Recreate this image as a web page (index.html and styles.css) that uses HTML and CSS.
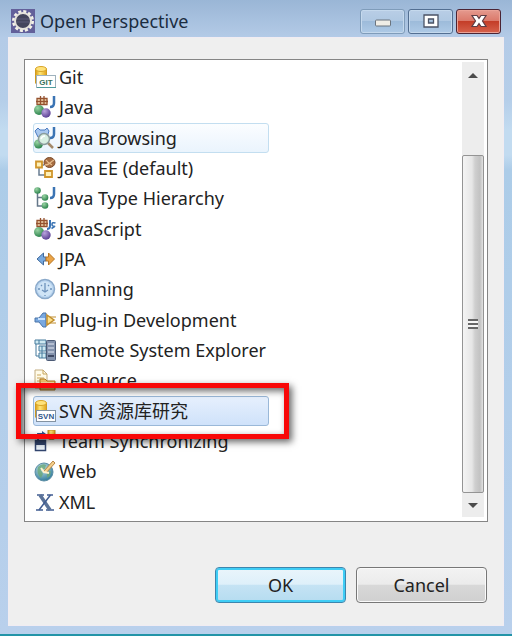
FILE: index.html
```html
<!DOCTYPE html>
<html lang="en">
<head>
    <meta charset="UTF-8">
    <meta name="viewport" content="width=device-width, initial-scale=1.0">
    <title>Open Perspective</title>
    <link rel="stylesheet" href="styles.css">
</head>
<body>
    <!-- Shared icon parts -->
    <svg class="defs" width="0" height="0" aria-hidden="true">
        <defs>
            <linearGradient id="gold">
                <stop offset="0" stop-color="#d99a10"/>
                <stop offset="0.4" stop-color="#ffe676"/>
                <stop offset="1" stop-color="#e0a21a"/>
            </linearGradient>
            <radialGradient id="green" cx="0.35" cy="0.3" r="0.8">
                <stop offset="0" stop-color="#9bd4a4"/>
                <stop offset="1" stop-color="#1f7a43"/>
            </radialGradient>
            <radialGradient id="purple" cx="0.35" cy="0.3" r="0.8">
                <stop offset="0" stop-color="#b9a3dc"/>
                <stop offset="1" stop-color="#50358c"/>
            </radialGradient>
            <radialGradient id="globe" cx="0.4" cy="0.3" r="0.8">
                <stop offset="0" stop-color="#c9e6ea"/>
                <stop offset="1" stop-color="#1f6f93"/>
            </radialGradient>
            <g id="cylinder">
                <path d="M1.5 3v14c0 2 11 2 11 0V3z" fill="url(#gold)" stroke="#d09a20"/>
                <ellipse cx="7" cy="3" rx="5.5" ry="2.5" fill="#ffe27a" stroke="#d8a528"/>
            </g>
            <g id="packages">
                <path d="M3 2.5h10v6H3z" fill="#f6dcb4" stroke="#95522f" stroke-width="1.3"/>
                <path d="M6.5 0v9M10 0v9M2 5.5h12" stroke="#95522f" stroke-width="1.3"/>
                <circle cx="5" cy="14" r="5" fill="url(#green)"/>
                <circle cx="12" cy="17" r="4.7" fill="url(#purple)"/>
            </g>
            <path id="jay" d="M20 0v7q0 4-4 4" fill="none" stroke="#3b74b4" stroke-width="2.5"/>
        </defs>
    </svg>

    <div class="window">
        <div class="titlebar">
            <svg class="app-icon" viewBox="0 0 24 24" aria-hidden="true">
                <rect width="24" height="24" fill="#63609a"/>
                <circle cx="12" cy="12" r="9.5" fill="none" stroke="#f3f1e8" stroke-width="3" stroke-dasharray="3 1.97"/>
                <circle cx="12" cy="12" r="8" fill="#44455c" stroke="#e4e1da" stroke-width="2"/>
                <path d="M6 10h12M5.5 13h13" stroke="#5c5d78"/>
            </svg>
            <h1>Open Perspective</h1>
            <div class="window-buttons">
                <button class="window-button" aria-label="Minimize">
                    <svg viewBox="0 0 18 16"><rect x="1.5" y="7" width="15" height="6" rx="1" fill="#efede6" stroke="#6b747e"/></svg>
                </button>
                <button class="window-button maximize" aria-label="Maximize">
                    <svg viewBox="0 0 18 16"><path d="M2 2h14v12H2zM6.500 6v4h5V6z" fill="#fff" fill-rule="evenodd" stroke="#4b5365" stroke-width="1.3"/></svg>
                </button>
                <button class="window-button close" aria-label="Close">
                    <svg viewBox="0 0 18 16"><path d="M2 2.500h5l2 3 2-3h5L12.500 8l3.500 5.500h-5l-2-3-2 3H2L5.500 8z" fill="#fff" stroke="#5e3d45" stroke-width="1.2"/></svg>
                </button>
            </div>
        </div>

        <div class="content">
            <div class="list-box">
                <ul class="perspectives" role="listbox" aria-label="Perspectives">
                    <li role="option">
                        <svg viewBox="0 0 22 22"><use href="#cylinder"/><rect x="2.5" y="9.5" width="19" height="12" fill="#fff" stroke="#9fb2bd"/><path d="M3 21.5h19" stroke="#4d9a9c"/><text class="tag git" x="12" y="19">GIT</text></svg>
                        Git
                    </li>
                    <li role="option">
                        <svg viewBox="0 0 22 22"><use href="#packages"/><use href="#jay"/></svg>
                        Java
                    </li>
                    <li role="option" class="hot">
                        <svg viewBox="0 0 22 22"><path d="M1 4l3-3 2 2h5l2-2 2 3-2 6H4z" fill="#a9c8ee" stroke="#4b7ac0"/><circle cx="4.5" cy="17" r="4.5" fill="url(#green)"/><path d="M13 15l6 6" stroke="#a3896a" stroke-width="2.5"/><circle cx="10" cy="12" r="5.5" fill="#d8efe2" stroke="#8b9c9c" stroke-width="1.5"/><path d="M7 12q1-3 4-3" fill="none" stroke="#fff" stroke-width="1.5"/><use href="#jay"/></svg>
                        Java Browsing
                    </li>
                    <li role="option">
                        <svg viewBox="0 0 22 22"><path d="M5 9v9h7M5 8h5" fill="none" stroke="#687c91" stroke-width="1.5"/><path d="M2 4.500h6v6H2zM11 14h7v6h-7z" fill="#fff1b8" stroke="#d0962c" stroke-width="1.8"/><ellipse cx="15.500" cy="5.500" rx="5.500" ry="5" fill="#a66c41" stroke="#7a4b2b"/><path d="M11 8q3 0 5-2t4-3M12 3q2 3 6 5" fill="none" stroke="#e8bd8c" stroke-width="1.3"/></svg>
                        Java EE (default)
                    </li>
                    <li role="option">
                        <svg viewBox="0 0 22 22"><path d="M3.500 4v15H10M3.500 10.500H10" fill="none" stroke="#65788a" stroke-width="1.5"/><circle cx="3.500" cy="3.500" r="3.300" fill="url(#green)"/><circle cx="11" cy="10.500" r="3.300" fill="url(#green)"/><circle cx="11" cy="18.500" r="3.300" fill="url(#green)"/><use href="#jay"/></svg>
                        Java Type Hierarchy
                    </li>
                    <li role="option">
                        <svg viewBox="0 0 22 22"><use href="#packages"/><path d="M16 2v6q0 3-3 3" fill="none" stroke="#3b74b4" stroke-width="2"/><path d="M21.500 5q-3.500-1-3.500 1.200t2 2-2.500 2.300" fill="none" stroke="#3b74b4" stroke-width="1.6"/></svg>
                        JavaScript
                    </li>
                    <li role="option">
                        <svg viewBox="0 0 22 22"><path d="M9.500 5v4H12v4H9.500v4L3 11z" fill="#78a9df" stroke="#416b9d"/><path d="M14.500 5l6 6-6 6v-4H12V9h2.500z" fill="#eaa447" stroke="#b87522"/></svg>
                        JPA
                    </li>
                    <li role="option">
                        <svg viewBox="0 0 22 22"><circle cx="11" cy="11" r="9.5" fill="#b9d4ef" stroke="#8aa9ca" stroke-width="1.5"/><circle cx="11" cy="11" r="7.5" fill="#cfe4f6"/><path d="M11 5v8M8 12l3 2 3-2M4 11h2M16 11h2M11 17v1M7 7l1 1M15 7l-1 1" fill="none" stroke="#6c91bb" stroke-width="1.3"/></svg>
                        Planning
                    </li>
                    <li role="option">
                        <svg viewBox="0 0 22 22"><path d="M1 9h4l4-5h3v14H9l-4-5H1z" fill="#78a8e0" stroke="#4a74a8"/><path d="M4 10h7" stroke="#c7e1ff" stroke-width="2"/><path d="M13 6l7 5-7 5z" fill="#ffe18a" stroke="#c08d2c" stroke-width="1.5"/><path d="M16 8h6M16 14h6" stroke="#c08d2c"/></svg>
                        Plug-in Development
                    </li>
                    <li role="option">
                        <svg viewBox="0 0 22 22"><path d="M1 1h11v4H1zM5 7h7v5H5zM5 14h7v5H5z" fill="#cfeaf2" stroke="#477b9d"/><path d="M2 5v12h3M5 1v4M8 7v12" fill="none" stroke="#477b9d"/><rect x="12.5" y="1.5" width="9" height="20" rx="1" fill="#8493ad" stroke="#4c5b76"/><path d="M14 5h6M14 9h6M14 13h6" stroke="#c3cddd" stroke-width="1.5"/><path d="M14 17h6" stroke="#3e4964" stroke-width="2"/></svg>
                        Remote System Explorer
                    </li>
                    <li role="option">
                        <svg viewBox="0 0 22 22"><path d="M1 1h8l4 4v14H1z" fill="#fffbe9" stroke="#c3ad80"/><path d="M9 1v4h4M3 6h4M3 9h7M3 12h5" fill="none" stroke="#c9a65b"/><path d="M6 10h5l2 2h8v9H6z" fill="#f2c56b" stroke="#b07b24"/><path d="M7 14h13" stroke="#ffe6a9" stroke-width="2"/></svg>
                        Resource
                    </li>
                    <li role="option" class="selected" aria-selected="true">
                        <svg viewBox="0 0 22 22"><use href="#cylinder"/><rect x="2.5" y="10.5" width="19" height="11" fill="#fff" stroke="#8292a2"/><text class="tag svn" x="12" y="19">SVN</text></svg>
                        SVN 资源库研究
                        <span class="highlight-frame"></span>
                    </li>
                    <li role="option">
                        <svg viewBox="0 0 22 22"><path d="M4 10V4h7" fill="none" stroke="#31548f" stroke-width="1.8"/><path d="M8 1l4 3-4 3z" fill="#31548f"/><path d="M14 0v8c0 2 7 2 7 0V0z" fill="url(#gold)" stroke="#b98a22"/><rect x="1.5" y="10.5" width="10" height="10" fill="#e9f0f8" stroke="#33466f" stroke-width="1.5"/><path d="M1 11h11v4H1z" fill="#33466f"/></svg>
                        Team Synchronizing
                    </li>
                    <li role="option">
                        <svg viewBox="0 0 22 22"><circle cx="10" cy="12" r="9" fill="url(#globe)" stroke="#5c8ea5"/><path d="M4 7q4-4 8-2l-1 4-4 1 2 4-2 4q-5-4-3-11zM13 12l4-1-1 5-3 2z" fill="#6aa878" opacity="0.8"/><path d="M10 11L19 1l2 2-9 10z" fill="#f4cf8b" stroke="#b98745"/><path d="M7 8l3 4 5 1" fill="none" stroke="#fff2cd" stroke-width="2"/></svg>
                        Web
                    </li>
                    <li role="option">
                        <svg viewBox="0 0 22 22"><path d="M3 4h7M13 4h6M2 19h7M12 19h8" stroke="#405c91" stroke-width="1.5"/><path d="M6 4l10 15" stroke="#5a7298" stroke-width="3.500"/><path d="M16.500 4L5 19" stroke="#405c91" stroke-width="1.5"/></svg>
                        XML
                    </li>
                </ul>

                <div class="scrollbar">
                    <button class="scroll-arrow" aria-label="Scroll up">
                        <svg viewBox="0 0 10 6"><path d="M0 6l5-5 5 5z" fill="#4b4b4b"/></svg>
                    </button>
                    <div class="scroll-track">
                        <div class="scroll-thumb">
                            <span class="grip"></span>
                        </div>
                    </div>
                    <button class="scroll-arrow" aria-label="Scroll down">
                        <svg viewBox="0 0 10 6"><path d="M0 0l5 5 5-5z" fill="#4b4b4b"/></svg>
                    </button>
                </div>
            </div>

            <div class="actions">
                <button class="action default">OK</button>
                <button class="action">Cancel</button>
            </div>
        </div>
    </div>
</body>
</html>
```
FILE: styles.css
```css
* {
    box-sizing: border-box;
}

body {
    margin: 0;
    font-family: "Segoe UI", "Noto Sans", "Noto Sans CJK SC", sans-serif;
    font-size: 18px;
    color: #222;
}

.defs {
    position: absolute;
}

.window {
    display: flex;
    flex-direction: column;
    min-height: 100vh;
    padding: 0 8px 8px;
    border-bottom: 2px solid #2394a8;
    background: linear-gradient(#9ab6d6 0, #b4cbe7 38px, #b5cee9 100px, #c2dbf0 130px, #c2dbf0 155px, #accce8 170px, #b9d0ec 100%);
}

/* Title bar */
.titlebar {
    display: flex;
    align-items: center;
    height: 37px;
    padding: 5px 3px 0;
}

.app-icon {
    width: 24px;
    height: 24px;
}

h1 {
    flex: 1;
    margin: 0 0 0 5px;
    font-size: 18px;
    font-weight: normal;
    line-height: 24px;
    color: #1b2c40;
}

.window-buttons {
    display: flex;
    gap: 3px;
}

.window-button {
    display: flex;
    align-items: center;
    justify-content: center;
    width: 45px;
    height: 25px;
    padding: 0;
    border: 1px solid #7f9cba;
    border-radius: 3px;
    background: linear-gradient(#b9cee6 0, #afc8e2 50%, #9dbbda 50%, #aecae6 100%);
    box-shadow: inset 0 0 0 1px #c5d9ed;
}

.window-button svg {
    width: 18px;
    height: 16px;
}

.maximize {
    border-color: #536f92;
}

.close {
    border-color: #4b2434;
    background: linear-gradient(#e59a8f 0, #da7768 50%, #c43d28 50%, #d6624c 100%);
    box-shadow: inset 0 0 0 1px #eba296;
}

/* Dialog body */
.content {
    flex: 1;
    display: flex;
    flex-direction: column;
    padding: 21px 15px 22px;
    border: 1px solid #f1ecf2;
    background: #efefef;
}

.list-box {
    flex: 1;
    display: flex;
    justify-content: space-between;
    padding: 2px 3px 4px 8px;
    border: 1px solid #858585;
    background: #fff;
}

.perspectives {
    display: flex;
    flex-direction: column;
    width: 236px;
    margin: 0;
    padding: 0;
    list-style: none;
}

.perspectives li {
    position: relative;
    flex: 1;
    display: flex;
    align-items: center;
    gap: 3px;
    min-height: 30px;
    border: 1px solid transparent;
    border-radius: 3px;
    line-height: 24px;
    white-space: nowrap;
}

.perspectives svg {
    flex: none;
    width: 22px;
    height: 22px;
}

.perspectives .hot {
    border-color: #c3def0;
    background: linear-gradient(#fbfdff, #eaf4fd);
}

.perspectives .selected {
    border-color: #9ab8d8;
    background: linear-gradient(#e6f0fd, #cfe2fa);
}

.highlight-frame {
    position: absolute;
    z-index: 1;
    inset: -14px -21px -14px -18px;
    border: 5px solid #f80808;
    box-shadow: 3px 3px 7px rgba(0, 0, 0, 0.6), inset 3px 3px 7px rgba(0, 0, 0, 0.6);
}

.tag {
    font-family: "Liberation Sans", sans-serif;
    font-size: 8px;
    font-weight: bold;
    text-anchor: middle;
}

.git {
    fill: #39715b;
}

.svn {
    fill: #31578d;
}

/* Scrollbar */
.scrollbar {
    display: flex;
    flex-direction: column;
    width: 22px;
    background: #ededed;
}

.scroll-arrow {
    display: flex;
    align-items: center;
    justify-content: center;
    height: 24px;
    padding: 2px 0 0;
    border: 0;
    background: none;
}

.scroll-arrow svg {
    width: 10px;
    height: 6px;
}

.scroll-track {
    flex: 1;
    display: flex;
    align-items: flex-end;
}

.scroll-thumb {
    display: flex;
    align-items: center;
    justify-content: center;
    width: 100%;
    height: 83%;
    border: 1px solid #949494;
    border-radius: 2px;
    background: linear-gradient(90deg, #f4f4f4 0, #e6e6e6 45%, #cfcfcf 60%, #c2c2c2 85%, #e2e2e2 100%);
}

.grip {
    width: 10px;
    height: 10px;
    background: repeating-linear-gradient(#666 0, #666 2px, #f5f5f5 2px, #f5f5f5 4px);
}

/* Footer buttons */
.actions {
    display: flex;
    justify-content: flex-end;
    gap: 10px;
    margin-top: 45px;
    padding-right: 1px;
}

.action {
    width: 131px;
    height: 36px;
    padding: 0;
    border: 1px solid #777;
    border-radius: 4px;
    background: linear-gradient(#f3f3f3 0, #ebebeb 48%, #d8d8d8 50%, #d0d0d0 100%);
    box-shadow: inset 0 0 0 1px #fafafa;
    font: inherit;
    color: #222;
}

.default {
    border-color: #3c86ae;
    background: linear-gradient(#eaf5fb 0, #def0fa 48%, #c5e3f4 50%, #b5dcf0 100%);
    box-shadow: inset 0 0 0 2px #3fcdf5;
}
```
